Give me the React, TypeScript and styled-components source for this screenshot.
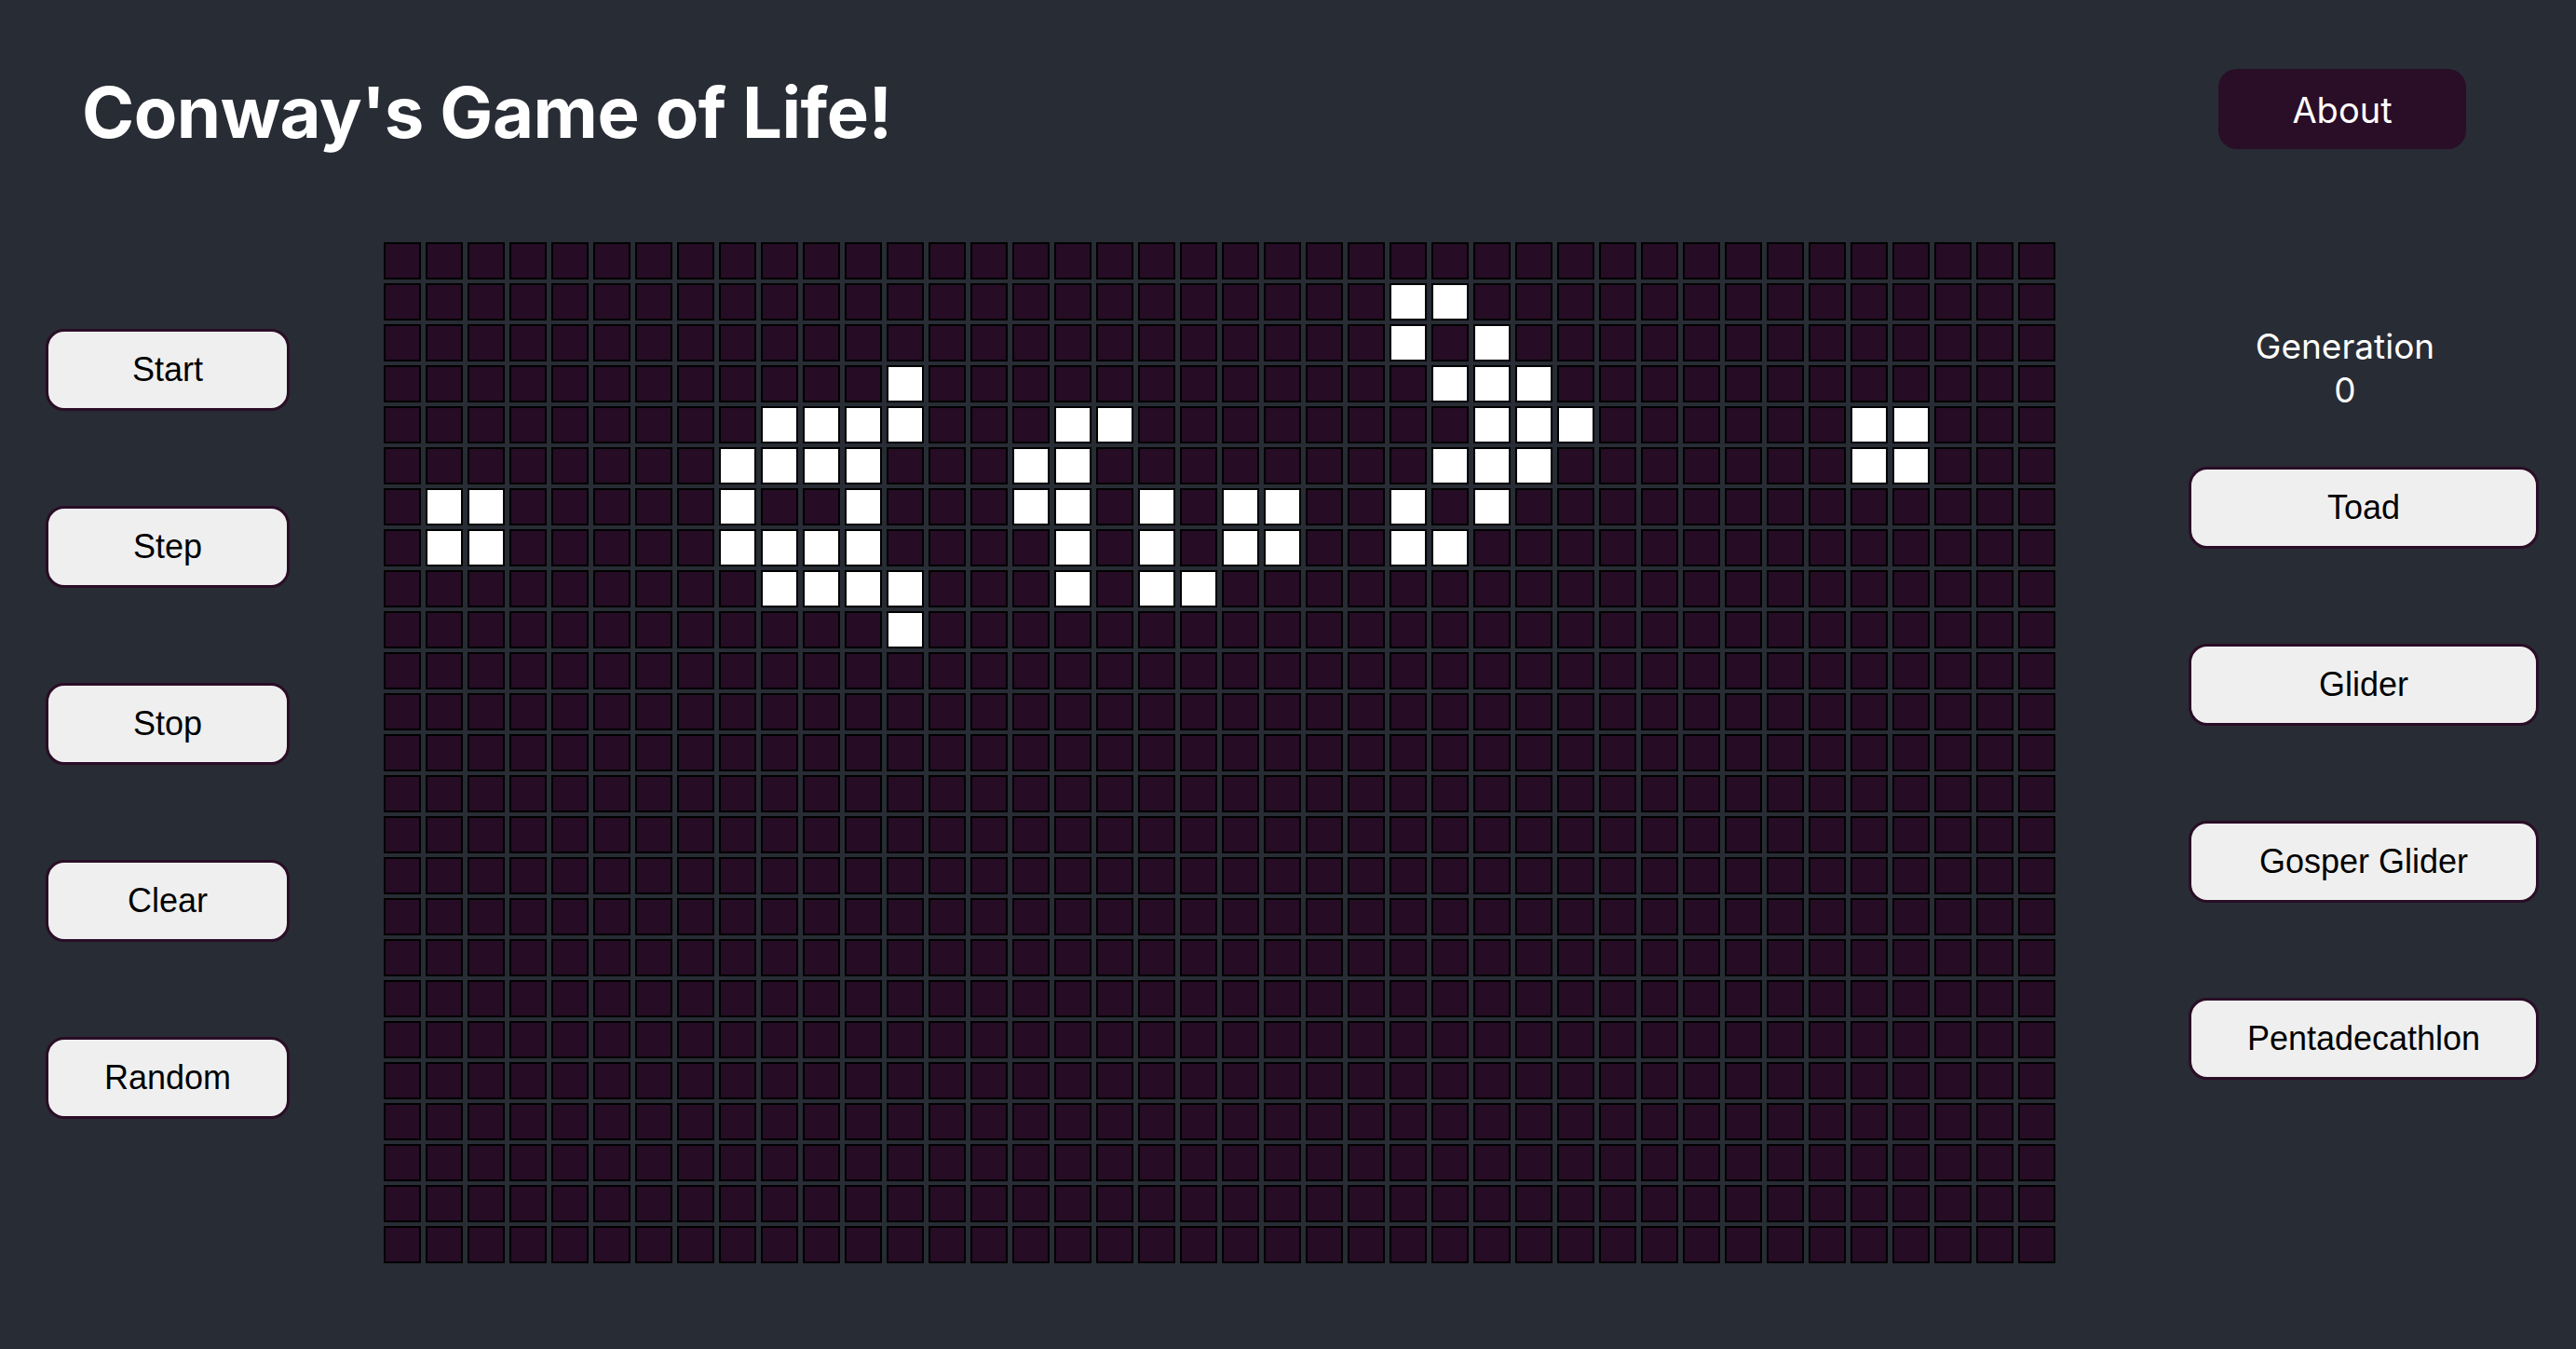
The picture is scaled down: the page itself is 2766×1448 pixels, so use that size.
import React from "react";
import styled, { createGlobalStyle } from "styled-components";

const GlobalStyle = createGlobalStyle`
  html, body {
    margin: 0;
    padding: 0;
    background: #282c34;
  }
  body {
    font-family: Inter, "Noto Sans", sans-serif;
    color: #ffffff;
  }
`;

const ROWS = 25;
const COLS = 40;

const LIVE: Record<number, number[]> = {
  1: [24, 25],
  2: [24, 26],
  3: [12, 25, 26, 27],
  4: [9, 10, 11, 12, 16, 17, 26, 27, 28, 35, 36],
  5: [8, 9, 10, 11, 15, 16, 25, 26, 27, 35, 36],
  6: [1, 2, 8, 11, 15, 16, 18, 20, 21, 24, 26],
  7: [1, 2, 8, 9, 10, 11, 16, 18, 20, 21, 24, 25],
  8: [9, 10, 11, 12, 16, 18, 19],
  9: [12],
};

const Page = styled.div`
  min-height: 1448px;
  background: #282c34;
  display: flex;
  flex-direction: column;
`;

const Header = styled.header`
  display: flex;
  align-items: center;
  justify-content: space-between;
  padding: 74px 118px 0 88px;
  height: 86px;
`;

const Title = styled.h1`
  margin: 6px 0 0 0;
  font-family: Inter, "Noto Sans", sans-serif;
  font-weight: 700;
  font-size: 76px;
  letter-spacing: -0.5px;
  color: #ffffff;
  line-height: 1;
`;

const AboutButton = styled.button`
  width: 266px;
  height: 86px;
  border: none;
  border-radius: 20px;
  background: #2a0d27;
  color: #ffffff;
  font-family: Inter, "Noto Sans", sans-serif;
  font-size: 38px;
  font-weight: 400;
  padding-top: 2px;
  cursor: pointer;
`;

const Main = styled.main`
  display: flex;
  align-items: flex-start;
  margin-top: 100px;
  padding-left: 49px;
`;

const SideColumn = styled.div<{ $width: number; $top: number }>`
  display: flex;
  flex-direction: column;
  align-items: center;
  width: ${(p) => p.$width}px;
  margin-top: ${(p) => p.$top}px;
  gap: 102px;
`;

const ControlButton = styled.button`
  width: 100%;
  height: 88px;
  box-sizing: border-box;
  background: #efefef;
  border: 3px solid #2a0d27;
  border-radius: 20px;
  color: #000000;
  font-family: "Liberation Sans", Arial, sans-serif;
  font-size: 36px;
  cursor: pointer;
`;

const Board = styled.div`
  display: grid;
  grid-template-columns: repeat(${COLS}, 40px);
  grid-auto-rows: 40px;
  column-gap: 5px;
  row-gap: 4px;
  margin: 0 143px 0 101px;
`;

const Cell = styled.div<{ $alive: boolean }>`
  box-sizing: border-box;
  width: 40px;
  height: 40px;
  border: 2px solid #000000;
  background: ${(p) => (p.$alive ? "#ffffff" : "#260c25")};
`;

const RightColumn = styled.div`
  display: flex;
  flex-direction: column;
  align-items: center;
  width: 376px;
`;

const Generation = styled.div`
  margin: 88px 40px 59px 0;
  font-family: Inter, "Noto Sans", sans-serif;
  font-size: 37px;
  line-height: 47px;
  text-align: center;
  color: #ffffff;
`;

const PatternList = styled.div`
  display: flex;
  flex-direction: column;
  gap: 102px;
  width: 100%;
`;

export default function App() {
  const cells: React.ReactNode[] = [];
  for (let r = 0; r < ROWS; r++) {
    const live = LIVE[r] || [];
    for (let c = 0; c < COLS; c++) {
      cells.push(<Cell key={`${r}-${c}`} $alive={live.includes(c)} />);
    }
  }

  return (
    <Page>
      <GlobalStyle />
      <Header>
        <Title>Conway's Game of Life!</Title>
        <AboutButton>About</AboutButton>
      </Header>
      <Main>
        <SideColumn $width={262} $top={93}>
          <ControlButton>Start</ControlButton>
          <ControlButton>Step</ControlButton>
          <ControlButton>Stop</ControlButton>
          <ControlButton>Clear</ControlButton>
          <ControlButton>Random</ControlButton>
        </SideColumn>
        <Board>{cells}</Board>
        <RightColumn>
          <Generation>
            Generation
            <br />0
          </Generation>
          <PatternList>
            <ControlButton>Toad</ControlButton>
            <ControlButton>Glider</ControlButton>
            <ControlButton>Gosper Glider</ControlButton>
            <ControlButton>Pentadecathlon</ControlButton>
          </PatternList>
        </RightColumn>
      </Main>
    </Page>
  );
}
